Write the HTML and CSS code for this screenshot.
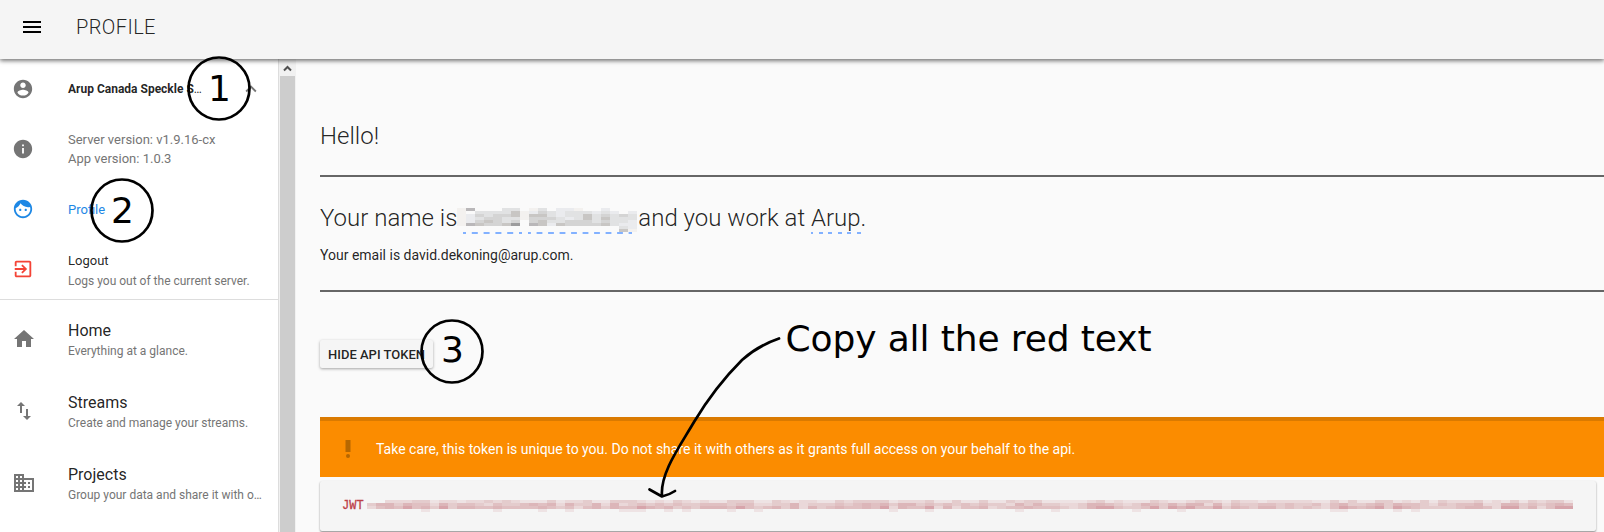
FILE: index.html
```html
<!DOCTYPE html>
<html lang="en">
<head>
<meta charset="utf-8">
<title>Profile</title>
<link rel="stylesheet" href="styles.css">
</head>
<body>
<header class="toolbar">
  <svg class="menu" viewBox="0 0 24 24"><path d="M3 18h18v-2H3v2zm0-5h18v-2H3v2zm0-7v2h18V6H3z"/></svg>
  <h1 class="title">PROFILE</h1>
</header>
<div class="body">
  <nav class="sidebar">
    <div class="item account">
      <svg class="icon" viewBox="0 0 24 24"><path d="M12 2C6.48 2 2 6.48 2 12s4.48 10 10 10 10-4.480 10-10S17.520 2 12 2zm0 3c1.660 0 3 1.340 3 3s-1.340 3-3 3-3-1.340-3-3 1.340-3 3-3zm0 14.200c-2.500 0-4.710-1.280-6-3.220.030-1.990 4-3.080 6-3.080 1.990 0 5.970 1.090 6 3.080-1.290 1.940-3.500 3.220-6 3.220z"/></svg>
      <div class="text"><span class="server"><b>Arup Canada Speckle S</b>…</span></div>
      <svg class="chevron" viewBox="0 0 24 24"><path d="M12 8l-6 6 1.410 1.410L12 10.830l4.590 4.580L18 14z"/></svg>
    </div>
    <div class="item versions">
      <svg class="icon" viewBox="0 0 24 24"><path d="M12 2C6.480 2 2 6.480 2 12s4.480 10 10 10 10-4.480 10-10S17.520 2 12 2zm1 15h-2v-6h2v6zm0-8h-2V7h2v2z"/></svg>
      <div class="text"><span class="version">Server version: v1.9.16-cx</span><span class="version">App version: 1.0.3</span></div>
    </div>
    <div class="item profile">
      <svg class="icon" viewBox="0 0 24 24"><path d="M9 11.750c-.690 0-1.250.560-1.250 1.250s.560 1.250 1.250 1.250 1.250-.560 1.250-1.250-.560-1.250-1.250-1.250zm6 0c-.690 0-1.250.560-1.250 1.250s.560 1.250 1.250 1.250 1.250-.560 1.250-1.250-.560-1.250-1.250-1.250zM12 2C6.480 2 2 6.480 2 12s4.480 10 10 10 10-4.480 10-10S17.520 2 12 2zm0 18c-4.410 0-8-3.590-8-8 0-.290.020-.580.050-.860 2.360-1.050 4.230-2.980 5.210-5.370C11.070 8.330 14.050 10 17.420 10c.780 0 1.530-.090 2.250-.260.210.710.330 1.470.330 2.260 0 4.410-3.590 8-8 8z"/></svg>
      <div class="text"><span class="name small">Profile</span></div>
    </div>
    <div class="item logout">
      <svg class="icon" viewBox="0 0 24 24"><path d="M10.090 15.590L11.500 17l5-5-5-5-1.410 1.410L12.670 11H3v2h9.670l-2.580 2.590zM19 3H5c-1.110 0-2 .900-2 2v4h2V5h14v14H5v-4H3v4c0 1.100.890 2 2 2h14c1.100 0 2-.900 2-2V5c0-1.100-.900-2-2-2z"/></svg>
      <div class="text"><span class="name small">Logout</span><span class="note">Logs you out of the current server.</span></div>
    </div>
    <div class="item main">
      <svg class="icon big" viewBox="0 0 24 24"><path d="M10 20v-6h4v6h5v-8h3L12 3 2 12h3v8z"/></svg>
      <div class="text"><span class="name">Home</span><span class="note">Everything at a glance.</span></div>
    </div>
    <div class="item main">
      <svg class="icon big" viewBox="0 0 24 24"><path d="M16 17.010V10h-2v7.010h-3L15 21l4-3.990h-3zM9 3L5 6.990h3V14h2V6.990h3L9 3z"/></svg>
      <div class="text"><span class="name">Streams</span><span class="note">Create and manage your streams.</span></div>
    </div>
    <div class="item main">
      <svg class="icon big" viewBox="0 0 24 24"><path d="M12 7V3H2v18h20V7H12zM6 19H4v-2h2v2zm0-4H4v-2h2v2zm0-4H4V9h2v2zm0-4H4V5h2v2zm4 12H8v-2h2v2zm0-4H8v-2h2v2zm0-4H8V9h2v2zm0-4H8V5h2v2zm10 12h-8v-2h2v-2h-2v-2h2v-2h-2V9h8v10zm-2-8h-2v2h2v-2zm0 4h-2v2h2v-2z"/></svg>
      <div class="text"><span class="name">Projects</span><span class="note">Group your data and share it with o…</span></div>
    </div>
  </nav>
  <div class="scrollbar"><svg class="up" viewBox="0 0 16 17"><path d="M4 11.500L7.500 8l3.500 3.500"/></svg><div class="thumb"></div></div>
  <main class="content">
    <h2 class="hello">Hello!</h2>
    <p class="who"><span>Your name is</span><span class="redacted"><svg id="name-mosaic" class="name-mosaic" viewBox="0 0 180 27"><path class="dash" stroke-dasharray="6 5.8" stroke-dashoffset="3" d="M6 25h59"/><path class="dash" stroke-dasharray="5.8 5.700" stroke-dashoffset="2.900" d="M71 25h104"/></svg></span><span>and you work at <span class="edit">Arup</span>.</span></p>
    <p class="email">Your email is david.dekoning@arup.com.</p>
    <button class="token-button">HIDE API TOKEN</button>
    <div class="alert"><svg class="bang" viewBox="0 0 6 18"><path d="M.500 0h5v12h-5z"/><circle cx="3" cy="16" r="2"/></svg><span>Take care, this token is unique to you. Do not share it with others as it grants full access on your behalf to the api.</span></div>
    <div class="card"><code>JWT</code><svg id="token-mosaic" class="token-mosaic" viewBox="0 0 1212 15"></svg></div>
  </main>
</div>
<svg class="notes" viewBox="0 0 1604 532">
  <ellipse cx="219" cy="88.500" rx="30.500" ry="31"/><ellipse cx="122" cy="210.500" rx="30.500" ry="31"/><ellipse cx="452" cy="351.500" rx="30.500" ry="31"/>
  <path d="M779 338.500C766 343 753 350 742 360C719 383 706 402 694 422C680 446 660 473 662 496M649.500 489.500L662 496.500Q669 495 675 491"/>
  <text x="208" y="101">1</text><text x="111" y="223">2</text><text x="441" y="362">3</text>
  <text x="785.500" y="351" textLength="366">Copy all the red text</text>
</svg>
<script src="mosaic.js"></script>
</body>
</html>
```
FILE: styles.css
```css
* { box-sizing: border-box; }
body { margin: 0; width: 1604px; height: 532px; overflow: hidden; background: #fafafa; color: rgba(0,0,0,.87); font-family: Roboto, sans-serif; display: flex; flex-direction: column; position: relative; }
h1, h2, p { margin: 0; font-weight: 300; }
.toolbar { height: 59px; flex: none; background: #f5f5f5; display: flex; align-items: center; padding: 0 20px 5px; gap: 32px; box-shadow: 0 1px 5px rgba(0,0,0,.5), 0 2px 4px rgba(0,0,0,.2); z-index: 2; }
.menu { width: 24px; height: 24px; }
.title { font-size: 20px; letter-spacing: .4px; }
.body { flex: 1; display: flex; min-height: 0; }
.sidebar { width: 279px; background: #fff; border-right: 1px solid #ddd; display: flex; flex-direction: column; flex: none; }
.item { display: flex; align-items: center; padding-left: 12px; flex: none; height: 60px; }
.icon { width: 22px; height: 22px; fill: #757575; margin-right: 34px; flex: none; }
.icon.big { width: 24px; height: 24px; margin-right: 32px; }
.text { display: flex; flex-direction: column; white-space: nowrap; }
.server { font-size: 12px; width: 160px; }
.chevron { width: 22px; height: 22px; fill: #757575; margin-left: 12px; }
.version { font-size: 13px; line-height: 19px; color: #757575; }
.name { font-size: 16px; line-height: 22px; }
.small { font-size: 13px; line-height: 20px; }
.note { font-size: 12px; line-height: 19px; color: #757575; }
.profile { color: #1e88e5; }
.profile .icon { fill: #1e88e5; }
.profile .text { padding-top: 2px; }
.logout { height: 61px; border-bottom: 1px solid #ddd; }
.logout .text { padding-top: 3px; }
.logout .note { line-height: 20px; }
.logout .icon { fill: #f44336; }
.main { height: 72px; padding-top: 5px; }
.main .text { padding-top: 4px; }
.scrollbar { width: 17px; padding-left: 1px; background: #f1f1f1; flex: none; }
.up { display: block; width: 16px; height: 17px; fill: none; stroke: #505050; stroke-width: 2; }
.thumb { height: 456px; width: 15px; background: #cdcdcd; }
.content { flex: 1; padding-left: 24px; display: flex; flex-direction: column; align-items: flex-start; min-width: 0; }
.hello { font-size: 24px; line-height: 32px; width: 100%; height: 118px; padding-top: 61px; border-bottom: 2px solid #666; }
.who { font-size: 24px; line-height: 32px; display: flex; margin-top: 25px; height: 32px; white-space: nowrap; }
.redacted { width: 181px; }
.name-mosaic { display: block; width: 180px; height: 27px; margin-top: 6px; }
.dash { stroke: #82b1ff; stroke-width: 2; }
.edit { display: inline-block; height: 32px; background: repeating-linear-gradient(90deg, #82b1ff 0 2px, transparent 2px 7.6px, #82b1ff 7.6px 9.6px) 0 100% / 100% 2px no-repeat; }
.email { font-size: 14px; font-weight: 400; line-height: 20px; width: 100%; height: 58px; padding-top: 11px; border-bottom: 2px solid #666; }
.token-button { margin-top: 48px; width: 113px; height: 28px; border: 0; border-radius: 2px; background: #f5f5f5; color: inherit; font: 500 13px Roboto, sans-serif; padding: 1px 0 0 8px; text-align: left; white-space: nowrap; box-shadow: 0 1px 3px rgba(0,0,0,.35); }
.alert { margin-top: 49px; width: 100%; height: 60px; background: #fb8c00; border-top: 4px solid #da7a00; display: flex; align-items: center; padding: 0 0 0 25px; color: #fff; font-size: 14px; gap: 25px; }
.bang { width: 6px; height: 18px; fill: #b66700; }
.card { width: 1276px; height: 50px; margin-top: 4px; background: #f5f5f5; border-radius: 2px; box-shadow: 0 1px 2px rgba(0,0,0,.45); display: flex; align-items: flex-start; padding: 18px 0 0 22px; }
.card code { font: 400 12px/14px "Liberation Mono", monospace; color: #bd4147; width: 25px; -webkit-text-stroke: .3px #bd4147; }
.token-mosaic { width: 1212px; height: 15px; margin-top: 1px; }
.notes { position: absolute; inset: 0; width: 1604px; height: 532px; z-index: 3; fill: none; stroke: #000; stroke-width: 2.7; stroke-linecap: round; stroke-linejoin: round; }
.notes text { font: 36px "DejaVu Sans", sans-serif; fill: #000; stroke: none; }
```
FILE: mosaic.js
```js
// Paints one rectangle per character; "." leaves the cell empty.
function paint(id, rows, w, h, palette) {
  const svg = document.getElementById(id);
  rows.forEach((row, y) => [...row].forEach((c, x) => {
    if (c === ".") return;
    const r = document.createElementNS("http://www.w3.org/2000/svg", "rect");
    r.setAttribute("x", x * w);
    r.setAttribute("y", y * h);
    r.setAttribute("width", w);
    r.setAttribute("height", h);
    r.setAttribute("fill", palette[c]);
    r.setAttribute("shape-rendering", "crispEdges");
    svg.append(r);
  }));
}

paint("name-mosaic", [
  "05...22.02.110..1...",
  "0.2222401321222121.1",
  "01323340442122423232",
  "01233220333212424222",
  "0134323.342233323221",
  "0543346.541433334211",
  "..................21",
  "..................40",
], 9, 3, ["#f3f1ef", "#eaebee", "#e1e2e3", "#d4d4d4", "#c8c6c4", "#b9b7b9", "#9c9c9d"]);

const tones = ["#eee3e4", "#ead8d9", "#e4cccd", "#e0c0c2", "#dcb6b9", "#d7a5ab"];
let seed = 7;
function next() {
  seed = (seed * 16807) % 2147483647;
  return seed / 2147483647;
}
const lines = ["", "", "", ""];
for (let i = 0; i < 134; i++) {
  const base = Math.floor(next() * 3);
  lines[0] += i < 2 ? "." : Math.floor(next() * 3);
  lines[1] += base + 1 + Math.floor(next() * 2);
  lines[2] += base + 1 + Math.floor(next() * 3);
  lines[3] += next() > 0.83 ? "0" : ".";
}
paint("token-mosaic", lines, 9, 3, tones);
```
